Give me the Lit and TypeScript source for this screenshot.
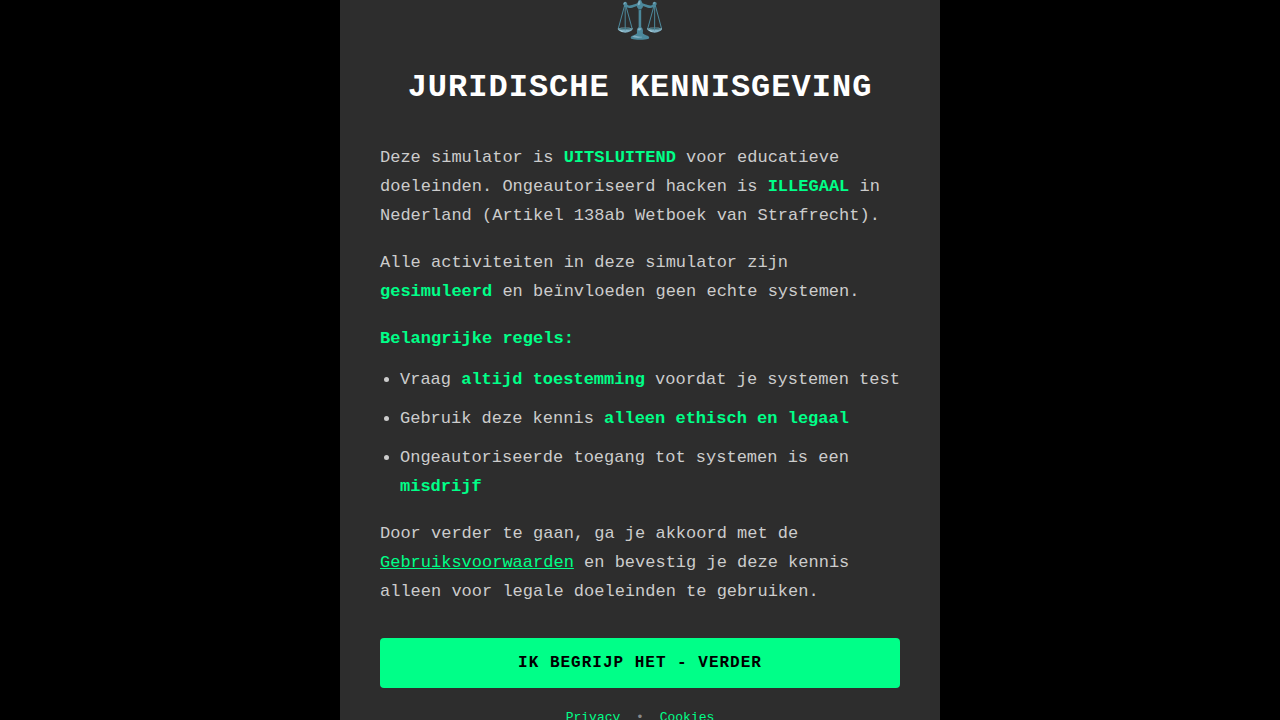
import { LitElement, html, css } from "lit";
import { customElement } from "lit/decorators.js";

@customElement("app-root")
export class AppRoot extends LitElement {
  static styles = css`
    :host {
      display: flex;
      align-items: center;
      justify-content: center;
      height: 100vh;
      overflow: hidden;
      background: #000;
      font-family: "Liberation Mono", "Courier New", monospace;
      color: #ccc;
    }
    .modal {
      box-sizing: border-box;
      width: 100%;
      max-width: 600px;
      flex-shrink: 0;
      padding: 40px;
      background: #2d2d2d;
    }
    .icon {
      margin-bottom: 16px;
      font-size: 40px;
      line-height: 60px;
      text-align: center;
    }
    h1 {
      margin: 0 0 35px;
      color: #fff;
      font-size: 32px;
      line-height: 40px;
      letter-spacing: 1px;
      text-align: center;
      text-transform: uppercase;
    }
    .content {
      margin-bottom: 32px;
      font-size: 17px;
      line-height: 29px;
    }
    p {
      margin: 0 0 18px;
    }
    p.rules {
      margin-bottom: 12px;
    }
    p:last-child {
      margin-bottom: 0;
    }
    ul {
      margin: 0 0 18px;
      padding-left: 20px;
    }
    li + li {
      margin-top: 10px;
    }
    strong,
    a {
      color: #00ff88;
    }
    button {
      display: block;
      width: 100%;
      padding: 16px;
      border: 0;
      border-radius: 4px;
      background: #00ff88;
      color: #000;
      font-family: inherit;
      font-size: 16px;
      font-weight: bold;
      line-height: 18px;
      letter-spacing: 1px;
      text-transform: uppercase;
      cursor: pointer;
    }
    .links {
      margin-top: 20px;
      color: #888;
      font-size: 13px;
      line-height: 20px;
      text-align: center;
    }
    .links a {
      text-decoration: none;
    }
    .dot {
      margin: 0 8px;
    }
  `;

  render() {
    return html`
      <main class="modal" role="dialog" aria-labelledby="title">
        <div class="icon" aria-hidden="true">⚖️</div>
        <h1 id="title">Juridische kennisgeving</h1>
        <div class="content">
          <p>
            Deze simulator is <strong>UITSLUITEND</strong> voor educatieve
            doeleinden. Ongeautoriseerd hacken is <strong>ILLEGAAL</strong> in
            Nederland (Artikel 138ab Wetboek van Strafrecht).
          </p>
          <p>
            Alle activiteiten in deze simulator zijn
            <strong>gesimuleerd</strong> en beïnvloeden geen echte systemen.
          </p>
          <p class="rules"><strong>Belangrijke regels:</strong></p>
          <ul>
            <li>Vraag <strong>altijd toestemming</strong> voordat je systemen test</li>
            <li>Gebruik deze kennis <strong>alleen ethisch en legaal</strong></li>
            <li>Ongeautoriseerde toegang tot systemen is een <strong>misdrijf</strong></li>
          </ul>
          <p>
            Door verder te gaan, ga je akkoord met de
            <a href="#voorwaarden">Gebruiksvoorwaarden</a> en bevestig je deze
            kennis alleen voor legale doeleinden te gebruiken.
          </p>
        </div>
        <button type="button">Ik begrijp het - verder</button>
        <div class="links">
          <a href="#privacy">Privacy</a>
          <span class="dot">•</span>
          <a href="#cookies">Cookies</a>
        </div>
      </main>
    `;
  }
}
